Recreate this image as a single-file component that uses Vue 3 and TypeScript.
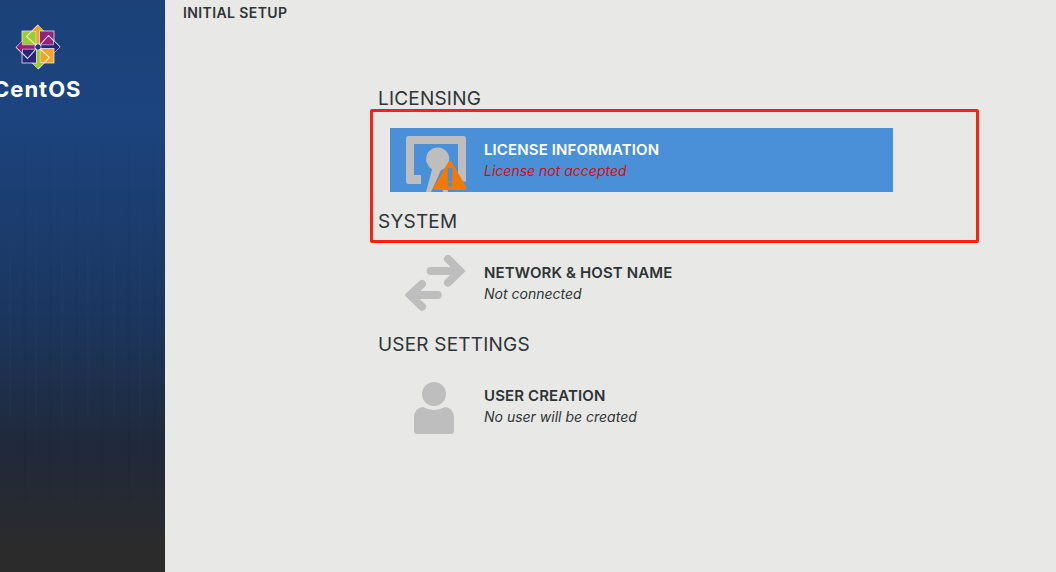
<script setup lang="ts">
interface Spoke {
  angle: number
  square: string
  arrow: string
}

// one corner square and one arrow per quarter turn of the logo
const spokes: Spoke[] = [
  { angle: 0, square: '#9ccd2a', arrow: '#efa724' },
  { angle: 90, square: '#932279', arrow: '#262577' },
  { angle: 180, square: '#efa724', arrow: '#9ccd2a' },
  { angle: 270, square: '#262577', arrow: '#932279' },
]
</script>

<template>
  <div class="page">
    <aside class="sidebar">
      <svg class="logo" width="46" height="46" viewBox="-23 -23 46 46">
        <g v-for="s in spokes" :key="s.angle" :transform="`rotate(${s.angle})`">
          <rect x="-16" y="-16" width="14.500" height="14.500" :fill="s.square" stroke="#e4e4ee" stroke-width="0.800" />
          <path d="M0 -22 L-11.500 -10.500 L-1.500 -1.500" fill="none" stroke="#e4e4ee" stroke-width="1.100" />
          <path d="M0 -22 L-6.500 -15.500 L-2.200 -15.500 L-2.200 -3 L2.200 -3 L2.200 -15.500 L6.500 -15.500 Z" :fill="s.arrow" stroke="#e4e4ee" stroke-width="0.600" />
        </g>
        <rect x="-2" y="-2" width="4" height="4" fill="#1b3d70" />
      </svg>
      <div class="brand">CentOS</div>
    </aside>

    <main class="main">
      <div class="title">INITIAL SETUP</div>

      <div class="hub">
        <h2>LICENSING</h2>
        <div class="spoke selected">
          <div class="icon">
            <svg width="62" height="56" viewBox="0 0 62 56">
              <path d="M15 48 H3 A3 3 0 0 1 0 45 V3 A3 3 0 0 1 3 0 H57 A3 3 0 0 1 60 3 V45.500 H52 V8 H8 V39 H15 Z" fill="#bebebe" />
              <circle cx="31.700" cy="23" r="11.500" fill="#bebebe" />
              <path d="M27 30 L20 56 H25 L36 32 Z M36 50 H41 L42 56 H37 Z" fill="#bebebe" />
              <path d="M44 27 L29.500 52 H58.500 Z" fill="#f57900" stroke="#f57900" stroke-width="4" stroke-linejoin="round" />
              <rect x="41.700" y="32" width="4.500" height="13.500" fill="#4a90d9" />
              <rect x="41.700" y="46.500" width="4.500" height="4" fill="#4a90d9" />
            </svg>
          </div>
          <div class="text">
            <div class="name">LICENSE INFORMATION</div>
            <div class="status warn">License not accepted</div>
          </div>
        </div>

        <h2>SYSTEM</h2>
        <div class="spoke">
          <div class="icon">
            <svg class="net" width="62" height="58" viewBox="0 0 62 58">
              <g fill="none" stroke="#bebebe" stroke-width="8" stroke-linecap="round" stroke-linejoin="miter">
                <path d="M25.700 18 H52" />
                <path d="M43 6 L55 18 L43 29.700" />
                <path d="M32.700 42 H8" />
                <path d="M17 31 L5 42 L17 53.700" />
              </g>
            </svg>
          </div>
          <div class="text">
            <div class="name">NETWORK &amp; HOST NAME</div>
            <div class="status">Not connected</div>
          </div>
        </div>

        <h2>USER SETTINGS</h2>
        <div class="spoke">
          <div class="icon">
            <svg class="user" width="40" height="52" viewBox="0 0 40 52">
              <circle cx="20" cy="12" r="12" fill="#bebebe" />
              <path d="M9 25 Q20 31 31 25 Q40 26 40 36 V49 A3 3 0 0 1 37 52 H3 A3 3 0 0 1 0 49 V36 Q0 26 9 25 Z" fill="#bebebe" />
            </svg>
          </div>
          <div class="text">
            <div class="name">USER CREATION</div>
            <div class="status">No user will be created</div>
          </div>
        </div>
      </div>

      <div class="annotation"></div>
    </main>
  </div>
</template>

<style scoped>
.page {
  display: flex;
  width: 1056px;
  height: 572px;
  overflow: hidden;
  background: #e8e8e6;
  color: #2e3436;
  font-family: Inter, "Open Sans", sans-serif;
}

.sidebar {
  position: relative;
  flex: 0 0 165px;
  overflow: hidden;
  background: linear-gradient(180deg, #1b4178 0%, #1c447f 20%, #1b365f 55%, #20293a 78%, #2b2b2b 96%, #2b2b2b 100%);
}

.sidebar::after {
  content: "";
  position: absolute;
  inset: 130px 0 60px 0;
  background: repeating-linear-gradient(90deg, transparent 0 9px, rgba(255, 255, 255, 0.012) 9px 11px, transparent 11px 23px, rgba(0, 0, 0, 0.02) 23px 26px);
  -webkit-mask-image: linear-gradient(180deg, transparent, #000 40%, #000 70%, transparent);
  mask-image: linear-gradient(180deg, transparent, #000 40%, #000 70%, transparent);
}

.logo {
  display: block;
  margin: 24px 0 0 15px;
}

.brand {
  margin: 5px 0 0 -7px;
  color: #fff;
  font-size: 22px;
  line-height: 28px;
  font-weight: 700;
  letter-spacing: 1px;
}

.main {
  position: relative;
  flex: 1;
  min-width: 0;
}

.title {
  margin: 4px 0 0 18px;
  font-size: 14px;
  line-height: 18px;
  font-weight: 600;
  letter-spacing: 0.4px;
}

.hub {
  width: 515px;
  margin: 47px 0 0 213px;
}

h2 {
  margin: 0;
  padding: 20px 0 19px;
  font-size: 19px;
  line-height: 20px;
  font-weight: 400;
  letter-spacing: 0.2px;
}

.spoke {
  display: flex;
  align-items: center;
  width: 503px;
  height: 64px;
  margin-left: 12px;
}

.spoke.selected {
  background: #4a90d9;
  color: #fff;
}

.icon {
  display: flex;
  flex: 0 0 94px;
  justify-content: flex-start;
  align-self: flex-end;
  height: 64px;
  align-items: flex-end;
  padding-left: 16px;
  box-sizing: border-box;
}

.icon svg {
  display: block;
}

.icon .net {
  margin: 0 0 4px -1px;
}

.icon .user {
  margin: 0 0 4px 8px;
}

.text {
  display: flex;
  flex-direction: column;
  gap: 1px;
  padding-top: 1px;
}

.name {
  font-size: 15px;
  line-height: 20px;
  font-weight: 600;
  letter-spacing: 0.12px;
}

.status {
  font-size: 14px;
  line-height: 20px;
  font-style: italic;
}

.status.warn {
  color: #cc1111;
}

.annotation {
  position: absolute;
  left: 205px;
  top: 109px;
  width: 603px;
  height: 128px;
  border: 3px solid #ff2015;
  border-radius: 2px;
}
</style>
